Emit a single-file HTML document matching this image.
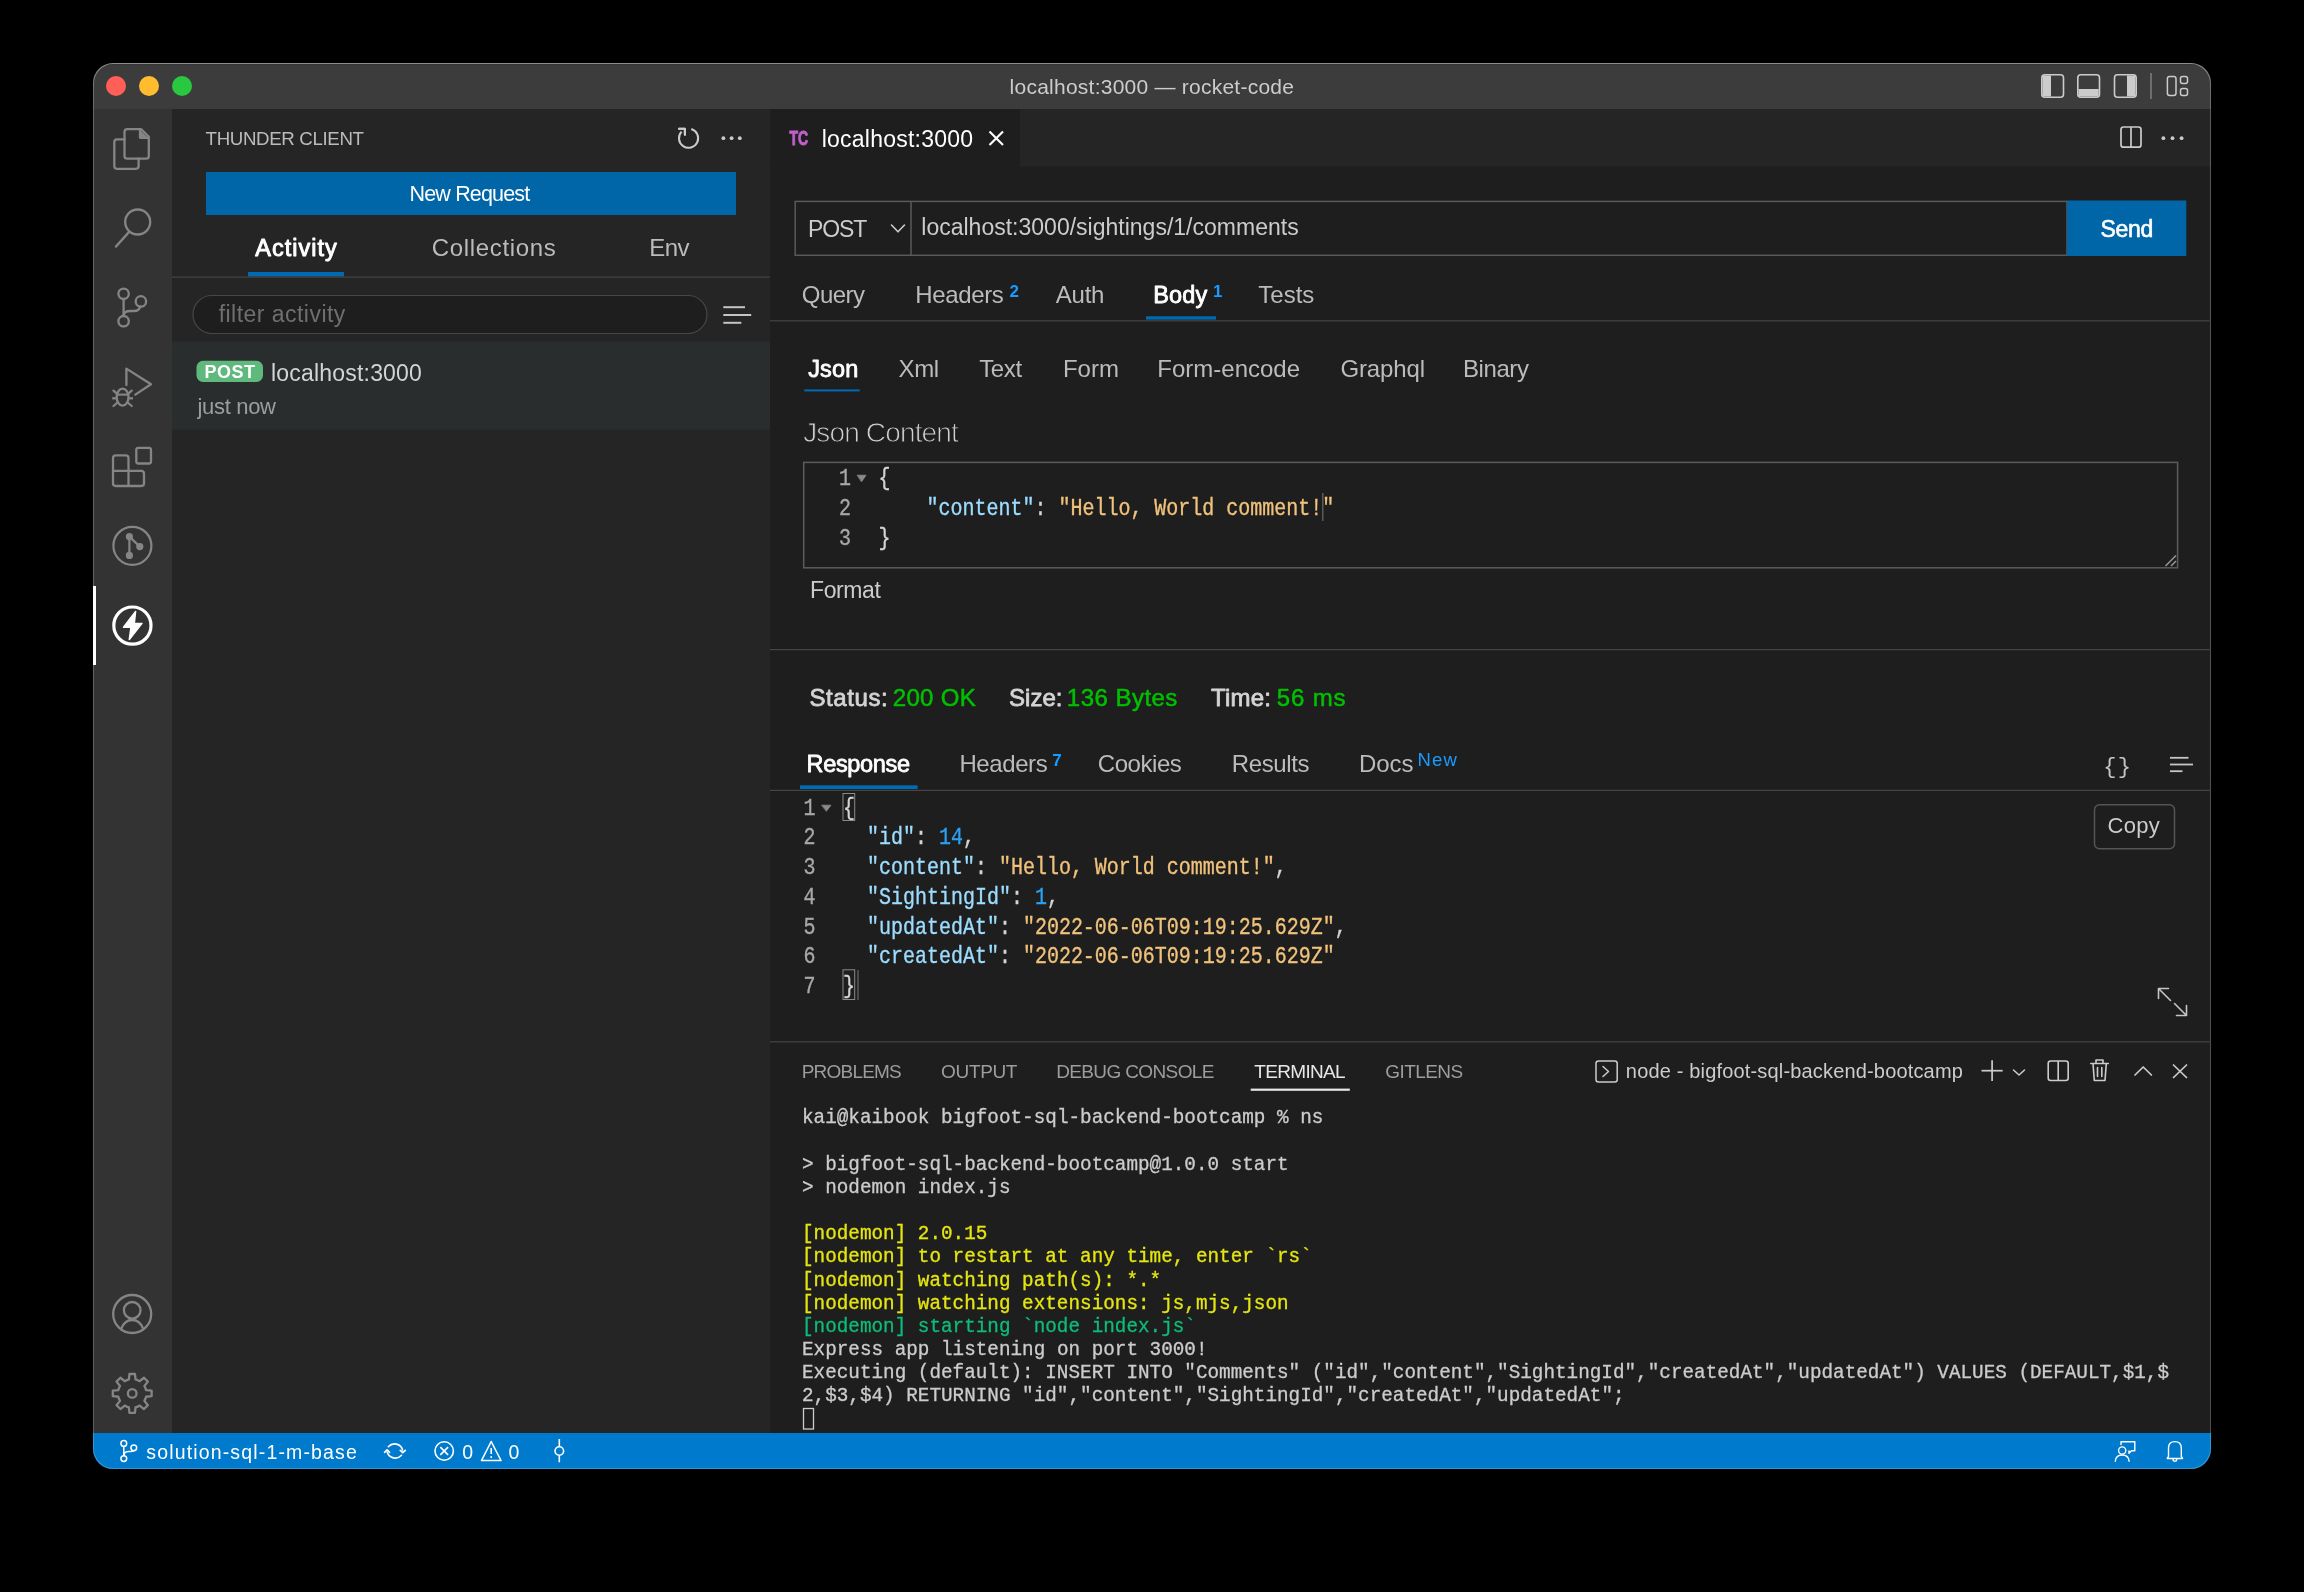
<!DOCTYPE html>
<html><head><meta charset="utf-8"><title>VS Code - Thunder Client</title>
<style>
html,body{margin:0;padding:0;background:#000;width:2304px;height:1592px;overflow:hidden}
svg{display:block;will-change:transform}
text{font-kerning:normal}
</style></head><body>
<svg width="2304" height="1592" viewBox="0 0 2304 1592">
<rect x="0" y="0" width="2304" height="1592" fill="#000000"/>
<defs><clipPath id="win"><rect x="93" y="63" width="2118" height="1406" rx="20"/></clipPath></defs>
<g clip-path="url(#win)">
<rect x="93" y="63" width="2118" height="1406" rx="0" fill="#1e1e1e" />
<rect x="93" y="63" width="2118" height="46" rx="0" fill="#3c3c3c" />
<rect x="93" y="109" width="79" height="1324" rx="0" fill="#333333" />
<rect x="172" y="109" width="598" height="1324" rx="0" fill="#252526" />
<rect x="770" y="109" width="1441" height="57.5" rx="0" fill="#252526" />
<rect x="770" y="109" width="250" height="57.5" rx="0" fill="#1e1e1e" />
<rect x="93" y="1433" width="2118" height="36" rx="0" fill="#007acc" />
</g>
<defs><linearGradient id="ol" gradientUnits="userSpaceOnUse" x1="0" y1="63" x2="0" y2="1469"><stop offset="0" stop-color="#ffffff" stop-opacity="0.42"/><stop offset="0.02" stop-color="#ffffff" stop-opacity="0.24"/><stop offset="1" stop-color="#ffffff" stop-opacity="0.2"/></linearGradient></defs>
<rect x="93.5" y="63.5" width="2117" height="1405" rx="20" fill="none" stroke="url(#ol)" stroke-width="1.1"/>
<line x1="99" y1="64.6" x2="2205" y2="64.6" stroke="#000000" stroke-opacity="0.12" stroke-width="1" stroke-linecap="butt"/>
<circle cx="116" cy="86" r="10" fill="#ff5f57"/>
<circle cx="149" cy="86" r="10" fill="#febc2e"/>
<circle cx="182" cy="86" r="10" fill="#28c840"/>
<text x="1009.58" y="93.5" font-family="Liberation Sans" font-size="21" font-weight="400" fill="#cccccc" textLength="284.35" lengthAdjust="spacing"  xml:space="preserve">localhost:3000 — rocket-code</text>
<rect x="2041.8" y="74.8" width="21.7" height="22.4" rx="3" fill="none" stroke="#cccccc" stroke-width="1.6" />
<path d="M2044 75.6 H2051 V96.4 H2044 Q2042.6 96.4 2042.6 95 V77 Q2042.6 75.6 2044 75.6 Z" stroke="none" stroke-width="1" fill="#cccccc" stroke-linecap="round" stroke-linejoin="round" />
<rect x="2077.8" y="74.8" width="21.7" height="22.4" rx="3" fill="none" stroke="#cccccc" stroke-width="1.6" />
<path d="M2078.6 89 H2098.7 V95 Q2098.7 96.4 2097.3 96.4 H2080 Q2078.6 96.4 2078.6 95 Z" stroke="none" stroke-width="1" fill="#cccccc" stroke-linecap="round" stroke-linejoin="round" />
<rect x="2114.5" y="74.8" width="21.7" height="22.4" rx="3" fill="none" stroke="#cccccc" stroke-width="1.6" />
<path d="M2127 75.6 H2134 Q2135.4 75.6 2135.4 77 V95 Q2135.4 96.4 2134 96.4 H2127 Z" stroke="none" stroke-width="1" fill="#cccccc" stroke-linecap="round" stroke-linejoin="round" />
<line x1="2151" y1="73" x2="2151" y2="99" stroke="#8a8a8a" stroke-width="1.3" stroke-linecap="butt"/>
<rect x="2167.4" y="76.5" width="8.6" height="19.0" rx="2.2" fill="none" stroke="#cccccc" stroke-width="1.5" />
<rect x="2180.5" y="76.5" width="7.0" height="7.0" rx="2" fill="none" stroke="#cccccc" stroke-width="1.5" />
<rect x="2180.5" y="88.5" width="7.0" height="7.0" rx="2" fill="none" stroke="#cccccc" stroke-width="1.5" />
<path d="M124.5 139.4 H117 Q114.3 139.4 114.3 142.1 V166.1 Q114.3 168.8 117 168.8 H135.9 Q138.6 168.8 138.6 166.1 V158.6" stroke="#858585" stroke-width="2.3" fill="none" stroke-linecap="round" stroke-linejoin="round" />
<path d="M127.2 129.2 H141.3 L148.8 136.7 V155.9 Q148.8 158.6 146.1 158.6 H127.2 Q124.5 158.6 124.5 155.9 V131.9 Q124.5 129.2 127.2 129.2 Z" stroke="#858585" stroke-width="2.3" fill="none" stroke-linecap="round" stroke-linejoin="round" />
<path d="M140 130 V137.8 H148" stroke="#858585" stroke-width="2.3" fill="#858585" stroke-linecap="round" stroke-linejoin="round" />
<circle cx="137.7" cy="222" r="12.5" fill="none" stroke="#858585" stroke-width="2.3"/>
<line x1="116" y1="246.5" x2="129" y2="232" stroke="#858585" stroke-width="2.5" stroke-linecap="round"/>
<circle cx="123.6" cy="293.8" r="5.2" fill="none" stroke="#858585" stroke-width="2.3"/>
<circle cx="140.9" cy="301.4" r="5.2" fill="none" stroke="#858585" stroke-width="2.3"/>
<circle cx="123.6" cy="321.2" r="5.2" fill="none" stroke="#858585" stroke-width="2.3"/>
<line x1="123.6" y1="299" x2="123.6" y2="316" stroke="#858585" stroke-width="2.3" stroke-linecap="butt"/>
<path d="M123.6 315 Q124.5 311 130 311 H134 Q139 311 140.3 306.6" stroke="#858585" stroke-width="2.3" fill="none" stroke-linecap="round" stroke-linejoin="round" />
<path d="M126.4 385 V368.6 L151 384.2 L135.3 394.6" stroke="#858585" stroke-width="2.3" fill="none" stroke-linecap="round" stroke-linejoin="round" />
<ellipse cx="122.6" cy="397.2" rx="5.9" ry="8.5" fill="none" stroke="#858585" stroke-width="2.3"/>
<line x1="117" y1="394.6" x2="128.2" y2="394.6" stroke="#858585" stroke-width="2.0999999999999996" stroke-linecap="butt"/>
<line x1="112.2" y1="398.3" x2="116.8" y2="398.3" stroke="#858585" stroke-width="2.3" stroke-linecap="butt"/>
<line x1="128.4" y1="398.3" x2="133" y2="398.3" stroke="#858585" stroke-width="2.3" stroke-linecap="butt"/>
<line x1="113.5" y1="390.6" x2="116.9" y2="393.6" stroke="#858585" stroke-width="2.3" stroke-linecap="round"/>
<line x1="131.7" y1="390.6" x2="128.3" y2="393.6" stroke="#858585" stroke-width="2.3" stroke-linecap="round"/>
<line x1="113.5" y1="406" x2="117" y2="403" stroke="#858585" stroke-width="2.3" stroke-linecap="round"/>
<line x1="131.7" y1="406" x2="128.2" y2="403" stroke="#858585" stroke-width="2.3" stroke-linecap="round"/>
<rect x="136.3" y="447.8" width="14.7" height="15.7" rx="2" fill="none" stroke="#858585" stroke-width="2.3" />
<path d="M113 458 Q113 455.3 115.7 455.3 H125.8 Q128.5 455.3 128.5 458 V470.8 H141.3 Q144 470.8 144 473.5 V483.3 Q144 486 141.3 486 H115.7 Q113 486 113 483.3 Z M113 470.8 H128.5 V486" stroke="#858585" stroke-width="2.3" fill="none" stroke-linecap="round" stroke-linejoin="round" />
<circle cx="132.4" cy="545.8" r="19" fill="none" stroke="#858585" stroke-width="2.2"/>
<path d="M129.4 536.6 V555.4 M129.4 536.6 L139.8 546.6" stroke="#858585" stroke-width="2.2" fill="none" stroke-linecap="round" stroke-linejoin="round" />
<circle cx="129.4" cy="536.6" r="3.6" fill="#858585"/>
<circle cx="139.8" cy="546.6" r="3.6" fill="#858585"/>
<circle cx="129.4" cy="555.4" r="3.6" fill="#858585"/>
<circle cx="132.4" cy="625.6" r="18.6" fill="none" stroke="#ffffff" stroke-width="3.2"/>
<path d="M135.6 611.5 L123.5 627.2 H131 L129.3 639.5 L142 623.4 H134.3 Z" stroke="#ffffff" stroke-width="1.5" fill="#ffffff" stroke-linecap="round" stroke-linejoin="round" />
<rect x="93" y="586" width="3" height="79" rx="0" fill="#ffffff" />
<circle cx="132.2" cy="1314" r="19" fill="none" stroke="#858585" stroke-width="2.3"/>
<circle cx="132.2" cy="1310.3" r="8.3" fill="none" stroke="#858585" stroke-width="2.3"/>
<path d="M121.2 1328.8 Q124.5 1320 132.2 1320 Q139.9 1320 143.2 1328.8" stroke="#858585" stroke-width="2.3" fill="none" stroke-linecap="round" stroke-linejoin="round" />
<path d="M126.73 1380.19 L128.86 1379.50 L129.47 1373.99 L134.93 1373.99 L135.54 1379.50 L137.67 1380.19 L139.67 1381.21 L144.00 1377.75 L147.85 1381.60 L144.39 1385.93 L145.41 1387.93 L146.10 1390.06 L151.61 1390.67 L151.61 1396.13 L146.10 1396.74 L145.41 1398.87 L144.39 1400.87 L147.85 1405.20 L144.00 1409.05 L139.67 1405.59 L137.67 1406.61 L135.54 1407.30 L134.93 1412.81 L129.47 1412.81 L128.86 1407.30 L126.73 1406.61 L124.73 1405.59 L120.40 1409.05 L116.55 1405.20 L120.01 1400.87 L118.99 1398.87 L118.30 1396.74 L112.79 1396.13 L112.79 1390.67 L118.30 1390.06 L118.99 1387.93 L120.01 1385.93 L116.55 1381.60 L120.40 1377.75 L124.73 1381.21 Z" stroke="#858585" stroke-width="2.3" fill="none" stroke-linecap="round" stroke-linejoin="round" />
<circle cx="132.2" cy="1393.4" r="4.3" fill="none" stroke="#858585" stroke-width="2.3"/>
<text x="205.58" y="145.2" font-family="Liberation Sans" font-size="18.7" font-weight="400" fill="#bbbbbb" textLength="158.45" lengthAdjust="spacing"  xml:space="preserve">THUNDER CLIENT</text>
<path d="M681.6 131.6 A9.6 9.6 0 1 0 691.3 129" fill="none" stroke="#cccccc" stroke-width="2"/>
<path d="M679 128.8 H684.9 V134.8" stroke="#cccccc" stroke-width="2.1" fill="none" stroke-linecap="round" stroke-linejoin="round" />
<path d="M679 128.8 H684.9 V134.8" stroke="#cccccc" stroke-width="2.1" fill="none" stroke-linecap="round" stroke-linejoin="round" />
<circle cx="723.4" cy="138.2" r="1.9" fill="#cccccc"/>
<circle cx="731.6" cy="138.2" r="1.9" fill="#cccccc"/>
<circle cx="739.8" cy="138.2" r="1.9" fill="#cccccc"/>
<rect x="206" y="172" width="530" height="43" rx="0" fill="#0066a8" />
<text x="409.54" y="200.6" font-family="Liberation Sans" font-size="21.5" font-weight="400" fill="#ffffff" textLength="120.62" lengthAdjust="spacing"  xml:space="preserve">New Request</text>
<text x="255.25" y="255.8" font-family="Liberation Sans" font-size="23.5" font-weight="400" fill="#ffffff" textLength="81.49" lengthAdjust="spacing"  stroke="#ffffff" stroke-width="0.9" stroke-linejoin="round" xml:space="preserve">Activity</text>
<text x="431.78" y="255.8" font-family="Liberation Sans" font-size="24" font-weight="400" fill="#bbbbbb" textLength="124.09" lengthAdjust="spacing"  xml:space="preserve">Collections</text>
<text x="649.33" y="255.8" font-family="Liberation Sans" font-size="24" font-weight="400" fill="#bbbbbb" textLength="40.05" lengthAdjust="spacing"  xml:space="preserve">Env</text>
<rect x="248" y="272" width="96" height="4.5" rx="0" fill="#006ab3" />
<rect x="172" y="276.5" width="598" height="1.2" rx="0" fill="#454545" />
<rect x="193" y="295.5" width="514" height="38" rx="19" fill="#1e1e1e" stroke="#474747" stroke-width="1.2"/>
<text x="218.67" y="322.4" font-family="Liberation Sans" font-size="23" font-weight="400" fill="#6f6f6f" textLength="126.67" lengthAdjust="spacing"  xml:space="preserve">filter activity</text>
<line x1="723.3" y1="307.2" x2="745" y2="307.2" stroke="#c5c5c5" stroke-width="2" stroke-linecap="butt"/>
<line x1="723.3" y1="315" x2="751.2" y2="315" stroke="#c5c5c5" stroke-width="2" stroke-linecap="butt"/>
<line x1="723.3" y1="322.8" x2="741.3" y2="322.8" stroke="#c5c5c5" stroke-width="2" stroke-linecap="butt"/>
<rect x="172" y="341.5" width="598" height="88.1" rx="0" fill="#2a2d2e" />
<rect x="196.5" y="360.8" width="66.5" height="21.2" rx="6.5" fill="#5fb97d" />
<text x="204.5" y="378" font-family="Liberation Sans" font-size="18" font-weight="700" fill="#ffffff" textLength="50.4" lengthAdjust="spacing"  xml:space="preserve">POST</text>
<text x="270.95" y="380.7" font-family="Liberation Sans" font-size="23" font-weight="400" fill="#d4d4d4" textLength="150.95" lengthAdjust="spacing"  xml:space="preserve">localhost:3000</text>
<text x="197.54" y="413.8" font-family="Liberation Sans" font-size="22" font-weight="400" fill="#9d9d9d" textLength="78.41" lengthAdjust="spacing"  xml:space="preserve">just now</text>
<text x="0" y="0" transform="translate(789.5 145.4) scale(0.72 1)" font-family="Liberation Sans" font-weight="700" font-size="19.5" fill="#c060c8" stroke="#c060c8" stroke-width="0.9">TC</text>
<text x="821.65" y="146.9" font-family="Liberation Sans" font-size="23" font-weight="400" fill="#ffffff" textLength="151.45" lengthAdjust="spacing"  xml:space="preserve">localhost:3000</text>
<line x1="989.5" y1="131.5" x2="1003" y2="145" stroke="#ffffff" stroke-width="2.1" stroke-linecap="butt"/>
<line x1="1003" y1="131.5" x2="989.5" y2="145" stroke="#ffffff" stroke-width="2.1" stroke-linecap="butt"/>
<rect x="2121" y="127" width="20" height="20.2" rx="2.5" fill="none" stroke="#cccccc" stroke-width="1.7" />
<line x1="2131" y1="127" x2="2131" y2="147.2" stroke="#cccccc" stroke-width="1.7" stroke-linecap="butt"/>
<circle cx="2163.4" cy="138.2" r="1.9" fill="#cccccc"/>
<circle cx="2172.5" cy="138.2" r="1.9" fill="#cccccc"/>
<circle cx="2181.6" cy="138.2" r="1.9" fill="#cccccc"/>
<rect x="795.2" y="201.4" width="1271.8" height="53.9" rx="0" fill="none" stroke="#5a5a5a" stroke-width="1.5" />
<line x1="911" y1="201.4" x2="911" y2="255.3" stroke="#5a5a5a" stroke-width="1.5" stroke-linecap="butt"/>
<text x="808.11" y="237.2" font-family="Liberation Sans" font-size="23" font-weight="400" fill="#cccccc" textLength="59.21" lengthAdjust="spacing"  xml:space="preserve">POST</text>
<path d="M891.5 225 L898 231.8 L904.5 225" stroke="#cccccc" stroke-width="1.6" fill="none" stroke-linecap="round" stroke-linejoin="round" />
<text x="921.25" y="234.7" font-family="Liberation Sans" font-size="23" font-weight="400" fill="#cccccc" textLength="377.38" lengthAdjust="spacing"  xml:space="preserve">localhost:3000/sightings/1/comments</text>
<rect x="2067" y="200.5" width="119.3" height="55.5" rx="0" fill="#0066a8" />
<text x="2100.56" y="236.5" font-family="Liberation Sans" font-size="23" font-weight="400" fill="#ffffff" textLength="52.73" lengthAdjust="spacing"  stroke="#ffffff" stroke-width="0.6" stroke-linejoin="round" xml:space="preserve">Send</text>
<text x="801.86" y="303.3" font-family="Liberation Sans" font-size="24" font-weight="400" fill="#bbbbbb" textLength="63.18" lengthAdjust="spacing"  xml:space="preserve">Query</text>
<text x="915.33" y="303.3" font-family="Liberation Sans" font-size="24" font-weight="400" fill="#bbbbbb" textLength="88.54" lengthAdjust="spacing"  xml:space="preserve">Headers</text>
<text x="1009.41" y="296.5" font-family="Liberation Sans" font-size="17" font-weight="700" fill="#1a9bff" textLength="11.07" lengthAdjust="spacing"  xml:space="preserve">2</text>
<text x="1055.85" y="303.3" font-family="Liberation Sans" font-size="24" font-weight="400" fill="#bbbbbb" textLength="48.61" lengthAdjust="spacing"  xml:space="preserve">Auth</text>
<text x="1153.37" y="303.3" font-family="Liberation Sans" font-size="23.5" font-weight="400" fill="#ffffff" textLength="53.77" lengthAdjust="spacing"  stroke="#ffffff" stroke-width="0.8" stroke-linejoin="round" xml:space="preserve">Body</text>
<text x="1212.93" y="296.5" font-family="Liberation Sans" font-size="17" font-weight="700" fill="#1a9bff" textLength="8.04" lengthAdjust="spacing"  xml:space="preserve">1</text>
<text x="1258.36" y="303.3" font-family="Liberation Sans" font-size="24" font-weight="400" fill="#bbbbbb" textLength="56.01" lengthAdjust="spacing"  xml:space="preserve">Tests</text>
<rect x="1146" y="316.3" width="70" height="3.3" rx="0" fill="#006ab3" />
<rect x="770" y="320.2" width="1441" height="1.2" rx="0" fill="#454545" />
<text x="808.13" y="376.7" font-family="Liberation Sans" font-size="23.5" font-weight="400" fill="#ffffff" textLength="50.19" lengthAdjust="spacing"  stroke="#ffffff" stroke-width="0.8" stroke-linejoin="round" xml:space="preserve">Json</text>
<text x="898.56" y="376.7" font-family="Liberation Sans" font-size="24" font-weight="400" fill="#bbbbbb" textLength="40.54" lengthAdjust="spacing"  xml:space="preserve">Xml</text>
<text x="979.26" y="376.7" font-family="Liberation Sans" font-size="24" font-weight="400" fill="#bbbbbb" textLength="42.81" lengthAdjust="spacing"  xml:space="preserve">Text</text>
<text x="1062.93" y="376.7" font-family="Liberation Sans" font-size="24" font-weight="400" fill="#bbbbbb" textLength="56.05" lengthAdjust="spacing"  xml:space="preserve">Form</text>
<text x="1157.23" y="376.7" font-family="Liberation Sans" font-size="24" font-weight="400" fill="#bbbbbb" textLength="142.84" lengthAdjust="spacing"  xml:space="preserve">Form-encode</text>
<text x="1340.39" y="376.7" font-family="Liberation Sans" font-size="24" font-weight="400" fill="#bbbbbb" textLength="84.81" lengthAdjust="spacing"  xml:space="preserve">Graphql</text>
<text x="1462.93" y="376.7" font-family="Liberation Sans" font-size="24" font-weight="400" fill="#bbbbbb" textLength="66.02" lengthAdjust="spacing"  xml:space="preserve">Binary</text>
<rect x="804.3" y="389.4" width="55.4" height="2.0" rx="0" fill="#006ab3" />
<text x="803.16" y="441.8" font-family="Liberation Sans" font-size="28" font-weight="400" fill="#d0d0d0" textLength="155.64" lengthAdjust="spacing" stroke="#1e1e1e" stroke-width="0.9" xml:space="preserve">Json Content</text>
<rect x="803.7" y="462.4" width="1373.9" height="105.4" rx="0" fill="none" stroke="#5c5c5c" stroke-width="1.5" />
<text x="0" y="0" transform="translate(839 485) scale(1 1.17)" font-family="Liberation Mono" font-size="20" stroke-width="0.3" xml:space="preserve"><tspan fill="#a8a8a8" stroke="#a8a8a8">1</tspan></text>
<text x="0" y="0" transform="translate(839 515) scale(1 1.17)" font-family="Liberation Mono" font-size="20" stroke-width="0.3" xml:space="preserve"><tspan fill="#a8a8a8" stroke="#a8a8a8">2</tspan></text>
<text x="0" y="0" transform="translate(839 545) scale(1 1.17)" font-family="Liberation Mono" font-size="20" stroke-width="0.3" xml:space="preserve"><tspan fill="#a8a8a8" stroke="#a8a8a8">3</tspan></text>
<path d="M857.5 475.2 H866 L861.7 481.5 Z" stroke="#8a8a8a" stroke-width="0.8" fill="#8a8a8a" stroke-linecap="round" stroke-linejoin="round" />
<text x="0" y="0" transform="translate(878.5 485) scale(1 1.17)" font-family="Liberation Mono" font-size="20" stroke-width="0.3" xml:space="preserve"><tspan fill="#d4d4d4" stroke="#d4d4d4">{</tspan></text>
<text x="0" y="0" transform="translate(878.5 515) scale(1 1.17)" font-family="Liberation Mono" font-size="20" stroke-width="0.3" xml:space="preserve"><tspan fill="#d4d4d4" stroke="#d4d4d4">    </tspan><tspan fill="#9cdcfe" stroke="#9cdcfe">"content"</tspan><tspan fill="#d4d4d4" stroke="#d4d4d4">: </tspan><tspan fill="#f0c27b" stroke="#f0c27b">"Hello, World comment!</tspan><tspan fill="#f0c27b" stroke="#f0c27b">"</tspan></text>
<text x="0" y="0" transform="translate(878.5 545) scale(1 1.17)" font-family="Liberation Mono" font-size="20" stroke-width="0.3" xml:space="preserve"><tspan fill="#d4d4d4" stroke="#d4d4d4">}</tspan></text>
<line x1="1322.8" y1="493" x2="1322.8" y2="521" stroke="#6a6a6a" stroke-width="1.2" stroke-linecap="butt"/>
<line x1="2165.5" y1="566" x2="2176" y2="555.5" stroke="#9a9a9a" stroke-width="1.5" stroke-linecap="butt"/>
<line x1="2171" y1="566" x2="2176" y2="561" stroke="#9a9a9a" stroke-width="1.5" stroke-linecap="butt"/>
<text x="810.11" y="598" font-family="Liberation Sans" font-size="23" font-weight="400" fill="#cccccc" textLength="70.66" lengthAdjust="spacing"  xml:space="preserve">Format</text>
<rect x="770" y="649" width="1441" height="1.2" rx="0" fill="#454545" />
<text x="809.41" y="706.2" font-family="Liberation Sans" font-size="24" font-weight="400" fill="#d4d4d4" textLength="78.28" lengthAdjust="spacing"  stroke="#d4d4d4" stroke-width="0.8" stroke-linejoin="round" xml:space="preserve">Status:</text>
<text x="892.79" y="706.2" font-family="Liberation Sans" font-size="24" font-weight="400" fill="#00c000" textLength="82.88" lengthAdjust="spacing"  stroke="#00c000" stroke-width="0.5" stroke-linejoin="round" xml:space="preserve">200 OK</text>
<text x="1009.11" y="706.2" font-family="Liberation Sans" font-size="24" font-weight="400" fill="#d4d4d4" textLength="53.28" lengthAdjust="spacing"  stroke="#d4d4d4" stroke-width="0.8" stroke-linejoin="round" xml:space="preserve">Size:</text>
<text x="1066.87" y="706.2" font-family="Liberation Sans" font-size="24" font-weight="400" fill="#00c000" textLength="110.5" lengthAdjust="spacing"  stroke="#00c000" stroke-width="0.5" stroke-linejoin="round" xml:space="preserve">136 Bytes</text>
<text x="1210.96" y="706.2" font-family="Liberation Sans" font-size="24" font-weight="400" fill="#d4d4d4" textLength="60.03" lengthAdjust="spacing"  stroke="#d4d4d4" stroke-width="0.8" stroke-linejoin="round" xml:space="preserve">Time:</text>
<text x="1276.74" y="706.2" font-family="Liberation Sans" font-size="24" font-weight="400" fill="#00c000" textLength="68.73" lengthAdjust="spacing"  stroke="#00c000" stroke-width="0.5" stroke-linejoin="round" xml:space="preserve">56 ms</text>
<text x="806.57" y="772.4" font-family="Liberation Sans" font-size="23.5" font-weight="400" fill="#ffffff" textLength="103.47" lengthAdjust="spacing"  stroke="#ffffff" stroke-width="0.8" stroke-linejoin="round" xml:space="preserve">Response</text>
<text x="959.43" y="772.4" font-family="Liberation Sans" font-size="24" font-weight="400" fill="#bbbbbb" textLength="88.24" lengthAdjust="spacing"  xml:space="preserve">Headers</text>
<text x="1052.27" y="766" font-family="Liberation Sans" font-size="17" font-weight="700" fill="#1a9bff" textLength="9.98" lengthAdjust="spacing"  xml:space="preserve">7</text>
<text x="1097.78" y="772.4" font-family="Liberation Sans" font-size="24" font-weight="400" fill="#bbbbbb" textLength="84.09" lengthAdjust="spacing"  xml:space="preserve">Cookies</text>
<text x="1231.73" y="772.4" font-family="Liberation Sans" font-size="24" font-weight="400" fill="#bbbbbb" textLength="77.84" lengthAdjust="spacing"  xml:space="preserve">Results</text>
<text x="1359.03" y="772.4" font-family="Liberation Sans" font-size="24" font-weight="400" fill="#bbbbbb" textLength="54.44" lengthAdjust="spacing"  xml:space="preserve">Docs</text>
<text x="1417.48" y="766.4" font-family="Liberation Sans" font-size="18.5" font-weight="400" fill="#1a9bff" textLength="39.47" lengthAdjust="spacing"  xml:space="preserve">New</text>
<rect x="800" y="785.3" width="117.6" height="3.7" rx="0" fill="#006ab3" />
<rect x="770" y="789.8" width="1441" height="1.2" rx="0" fill="#454545" />
<text x="2103.26" y="773" font-family="Liberation Mono" font-size="22" font-weight="400" fill="#c5c5c5" textLength="27.69" lengthAdjust="spacing"  xml:space="preserve">{ }</text>
<line x1="2170" y1="757.8" x2="2188.5" y2="757.8" stroke="#c5c5c5" stroke-width="1.8" stroke-linecap="butt"/>
<line x1="2170" y1="764.5" x2="2193" y2="764.5" stroke="#c5c5c5" stroke-width="1.8" stroke-linecap="butt"/>
<line x1="2170" y1="771.2" x2="2182.5" y2="771.2" stroke="#c5c5c5" stroke-width="1.8" stroke-linecap="butt"/>
<text x="0" y="0" transform="translate(803.5 814.7) scale(1 1.17)" font-family="Liberation Mono" font-size="20" stroke-width="0.3" xml:space="preserve"><tspan fill="#a8a8a8" stroke="#a8a8a8">1</tspan></text>
<text x="0" y="0" transform="translate(803.5 844.45) scale(1 1.17)" font-family="Liberation Mono" font-size="20" stroke-width="0.3" xml:space="preserve"><tspan fill="#a8a8a8" stroke="#a8a8a8">2</tspan></text>
<text x="0" y="0" transform="translate(803.5 874.2) scale(1 1.17)" font-family="Liberation Mono" font-size="20" stroke-width="0.3" xml:space="preserve"><tspan fill="#a8a8a8" stroke="#a8a8a8">3</tspan></text>
<text x="0" y="0" transform="translate(803.5 903.95) scale(1 1.17)" font-family="Liberation Mono" font-size="20" stroke-width="0.3" xml:space="preserve"><tspan fill="#a8a8a8" stroke="#a8a8a8">4</tspan></text>
<text x="0" y="0" transform="translate(803.5 933.7) scale(1 1.17)" font-family="Liberation Mono" font-size="20" stroke-width="0.3" xml:space="preserve"><tspan fill="#a8a8a8" stroke="#a8a8a8">5</tspan></text>
<text x="0" y="0" transform="translate(803.5 963.45) scale(1 1.17)" font-family="Liberation Mono" font-size="20" stroke-width="0.3" xml:space="preserve"><tspan fill="#a8a8a8" stroke="#a8a8a8">6</tspan></text>
<text x="0" y="0" transform="translate(803.5 993.2) scale(1 1.17)" font-family="Liberation Mono" font-size="20" stroke-width="0.3" xml:space="preserve"><tspan fill="#a8a8a8" stroke="#a8a8a8">7</tspan></text>
<path d="M822 805.2 H831 L826.5 811 Z" stroke="#8a8a8a" stroke-width="0.8" fill="#8a8a8a" stroke-linecap="round" stroke-linejoin="round" />
<text x="0" y="0" transform="translate(843 814.7) scale(1 1.17)" font-family="Liberation Mono" font-size="20" stroke-width="0.3" xml:space="preserve"><tspan fill="#d4d4d4" stroke="#d4d4d4">{</tspan></text>
<text x="0" y="0" transform="translate(843 844.45) scale(1 1.17)" font-family="Liberation Mono" font-size="20" stroke-width="0.3" xml:space="preserve"><tspan fill="#d4d4d4" stroke="#d4d4d4">  </tspan><tspan fill="#9cdcfe" stroke="#9cdcfe">"id"</tspan><tspan fill="#d4d4d4" stroke="#d4d4d4">: </tspan><tspan fill="#2aa1f5" stroke="#2aa1f5">14</tspan><tspan fill="#d4d4d4" stroke="#d4d4d4">,</tspan></text>
<text x="0" y="0" transform="translate(843 874.2) scale(1 1.17)" font-family="Liberation Mono" font-size="20" stroke-width="0.3" xml:space="preserve"><tspan fill="#d4d4d4" stroke="#d4d4d4">  </tspan><tspan fill="#9cdcfe" stroke="#9cdcfe">"content"</tspan><tspan fill="#d4d4d4" stroke="#d4d4d4">: </tspan><tspan fill="#f0c27b" stroke="#f0c27b">"Hello, World comment!"</tspan><tspan fill="#d4d4d4" stroke="#d4d4d4">,</tspan></text>
<text x="0" y="0" transform="translate(843 903.95) scale(1 1.17)" font-family="Liberation Mono" font-size="20" stroke-width="0.3" xml:space="preserve"><tspan fill="#d4d4d4" stroke="#d4d4d4">  </tspan><tspan fill="#9cdcfe" stroke="#9cdcfe">"SightingId"</tspan><tspan fill="#d4d4d4" stroke="#d4d4d4">: </tspan><tspan fill="#2aa1f5" stroke="#2aa1f5">1</tspan><tspan fill="#d4d4d4" stroke="#d4d4d4">,</tspan></text>
<text x="0" y="0" transform="translate(843 933.7) scale(1 1.17)" font-family="Liberation Mono" font-size="20" stroke-width="0.3" xml:space="preserve"><tspan fill="#d4d4d4" stroke="#d4d4d4">  </tspan><tspan fill="#9cdcfe" stroke="#9cdcfe">"updatedAt"</tspan><tspan fill="#d4d4d4" stroke="#d4d4d4">: </tspan><tspan fill="#f0c27b" stroke="#f0c27b">"2022-06-06T09:19:25.629Z"</tspan><tspan fill="#d4d4d4" stroke="#d4d4d4">,</tspan></text>
<text x="0" y="0" transform="translate(843 963.45) scale(1 1.17)" font-family="Liberation Mono" font-size="20" stroke-width="0.3" xml:space="preserve"><tspan fill="#d4d4d4" stroke="#d4d4d4">  </tspan><tspan fill="#9cdcfe" stroke="#9cdcfe">"createdAt"</tspan><tspan fill="#d4d4d4" stroke="#d4d4d4">: </tspan><tspan fill="#f0c27b" stroke="#f0c27b">"2022-06-06T09:19:25.629Z"</tspan></text>
<text x="0" y="0" transform="translate(843 993.2) scale(1 1.17)" font-family="Liberation Mono" font-size="20" stroke-width="0.3" xml:space="preserve"><tspan fill="#d4d4d4" stroke="#d4d4d4">}</tspan></text>
<rect x="843" y="793.5" width="11.7" height="27.0" rx="0" fill="none" stroke="#8a8a8a" stroke-width="1" />
<rect x="843" y="969.8" width="11.7" height="29.7" rx="0" fill="none" stroke="#8a8a8a" stroke-width="1" />
<line x1="858" y1="970" x2="858" y2="1000" stroke="#5a5a5a" stroke-width="1.5" stroke-linecap="butt"/>
<rect x="2094.5" y="804.8" width="80" height="44" rx="5" fill="#1e1e1e" stroke="#555555" stroke-width="1.5"/>
<text x="2107.58" y="833.2" font-family="Liberation Sans" font-size="22" font-weight="400" fill="#cccccc" textLength="52.16" lengthAdjust="spacing"  xml:space="preserve">Copy</text>
<path d="M2158.5 998.5 V988.5 H2168.5 M2158.5 988.5 L2170.5 1000.5" stroke="#c5c5c5" stroke-width="1.6" fill="none" stroke-linecap="round" stroke-linejoin="round" />
<path d="M2186.5 1005.5 V1015.5 H2176.5 M2186.5 1015.5 L2174.5 1003.5" stroke="#c5c5c5" stroke-width="1.6" fill="none" stroke-linecap="round" stroke-linejoin="round" />
<rect x="770" y="1041.2" width="1441" height="1.2" rx="0" fill="#454545" />
<text x="801.74" y="1078.2" font-family="Liberation Sans" font-size="19" font-weight="400" fill="#9d9d9d" textLength="100.03" lengthAdjust="spacing"  xml:space="preserve">PROBLEMS</text>
<text x="941.1" y="1078.2" font-family="Liberation Sans" font-size="19" font-weight="400" fill="#9d9d9d" textLength="76.34" lengthAdjust="spacing"  xml:space="preserve">OUTPUT</text>
<text x="1056.14" y="1078.2" font-family="Liberation Sans" font-size="19" font-weight="400" fill="#9d9d9d" textLength="158.28" lengthAdjust="spacing"  xml:space="preserve">DEBUG CONSOLE</text>
<text x="1254.37" y="1078.2" font-family="Liberation Sans" font-size="19" font-weight="400" fill="#e7e7e7" textLength="91.26" lengthAdjust="spacing"  xml:space="preserve">TERMINAL</text>
<text x="1385.34" y="1078.2" font-family="Liberation Sans" font-size="19" font-weight="400" fill="#9d9d9d" textLength="77.83" lengthAdjust="spacing"  xml:space="preserve">GITLENS</text>
<rect x="1250.7" y="1088.6" width="99.1" height="2.2" rx="0" fill="#e7e7e7" />
<rect x="1596" y="1061" width="21.2" height="21" rx="2.5" fill="none" stroke="#cccccc" stroke-width="1.5" />
<path d="M1603 1066.5 L1608.5 1071.5 L1603 1076.5" stroke="#cccccc" stroke-width="1.5" fill="none" stroke-linecap="round" stroke-linejoin="round" />
<text x="1625.87" y="1077.8" font-family="Liberation Sans" font-size="20" font-weight="400" fill="#cccccc" textLength="336.97" lengthAdjust="spacing"  xml:space="preserve">node - bigfoot-sql-backend-bootcamp</text>
<line x1="1981.5" y1="1070.7" x2="2002.7" y2="1070.7" stroke="#cccccc" stroke-width="1.7" stroke-linecap="butt"/>
<line x1="1992.1" y1="1060.3" x2="1992.1" y2="1081" stroke="#cccccc" stroke-width="1.7" stroke-linecap="butt"/>
<path d="M2013.5 1070 L2019 1075 L2024.5 1070" stroke="#cccccc" stroke-width="1.5" fill="none" stroke-linecap="round" stroke-linejoin="round" />
<rect x="2048.2" y="1061" width="20.0" height="19.5" rx="2.5" fill="none" stroke="#cccccc" stroke-width="1.6" />
<line x1="2058.2" y1="1061" x2="2058.2" y2="1080.5" stroke="#cccccc" stroke-width="1.6" stroke-linecap="butt"/>
<path d="M2090.8 1063.5 H2108.3 M2096 1063.5 V1060 H2103 V1063.5 M2093 1063.5 L2094.3 1080.5 H2105 L2106.3 1063.5 M2097.5 1067.5 V1076.5 M2101.8 1067.5 V1076.5" stroke="#cccccc" stroke-width="1.6" fill="none" stroke-linecap="round" stroke-linejoin="round" />
<path d="M2135 1075 L2143.2 1067 L2151.4 1075" stroke="#cccccc" stroke-width="1.7" fill="none" stroke-linecap="round" stroke-linejoin="round" />
<line x1="2173" y1="1064.5" x2="2187" y2="1078" stroke="#cccccc" stroke-width="1.7" stroke-linecap="butt"/>
<line x1="2187" y1="1064.5" x2="2173" y2="1078" stroke="#cccccc" stroke-width="1.7" stroke-linecap="butt"/>
<text x="802" y="1123.4" font-family="Liberation Mono" font-size="19.3" fill="#cccccc" stroke="#cccccc" stroke-width="0.3" textLength="521.33" lengthAdjust="spacing" xml:space="preserve">kai@kaibook bigfoot-sql-backend-bootcamp % ns</text>
<text x="802" y="1169.72" font-family="Liberation Mono" font-size="19.3" fill="#cccccc" stroke="#cccccc" stroke-width="0.3" textLength="486.57" lengthAdjust="spacing" xml:space="preserve">&gt; bigfoot-sql-backend-bootcamp@1.0.0 start</text>
<text x="802" y="1192.88" font-family="Liberation Mono" font-size="19.3" fill="#cccccc" stroke="#cccccc" stroke-width="0.3" textLength="208.53" lengthAdjust="spacing" xml:space="preserve">&gt; nodemon index.js</text>
<text x="802" y="1239.2" font-family="Liberation Mono" font-size="19.3" fill="#e5e510" stroke="#e5e510" stroke-width="0.3" textLength="185.36" lengthAdjust="spacing" xml:space="preserve">[nodemon] 2.0.15</text>
<text x="802" y="1262.36" font-family="Liberation Mono" font-size="19.3" fill="#e5e510" stroke="#e5e510" stroke-width="0.3" textLength="509.74" lengthAdjust="spacing" xml:space="preserve">[nodemon] to restart at any time, enter `rs`</text>
<text x="802" y="1285.52" font-family="Liberation Mono" font-size="19.3" fill="#e5e510" stroke="#e5e510" stroke-width="0.3" textLength="359.14" lengthAdjust="spacing" xml:space="preserve">[nodemon] watching path(s): *.*</text>
<text x="802" y="1308.68" font-family="Liberation Mono" font-size="19.3" fill="#e5e510" stroke="#e5e510" stroke-width="0.3" textLength="486.57" lengthAdjust="spacing" xml:space="preserve">[nodemon] watching extensions: js,mjs,json</text>
<text x="802" y="1331.84" font-family="Liberation Mono" font-size="19.3" fill="#0dbc79" stroke="#0dbc79" stroke-width="0.3" textLength="393.89" lengthAdjust="spacing" xml:space="preserve">[nodemon] starting `node index.js`</text>
<text x="802" y="1355.0" font-family="Liberation Mono" font-size="19.3" fill="#cccccc" stroke="#cccccc" stroke-width="0.3" textLength="405.48" lengthAdjust="spacing" xml:space="preserve">Express app listening on port 3000!</text>
<text x="802" y="1378.16" font-family="Liberation Mono" font-size="19.3" fill="#cccccc" stroke="#cccccc" stroke-width="0.3" textLength="1367.03" lengthAdjust="spacing" xml:space="preserve">Executing (default): INSERT INTO "Comments" ("id","content","SightingId","createdAt","updatedAt") VALUES (DEFAULT,$1,$</text>
<text x="802" y="1401.32" font-family="Liberation Mono" font-size="19.3" fill="#cccccc" stroke="#cccccc" stroke-width="0.3" textLength="822.54" lengthAdjust="spacing" xml:space="preserve">2,$3,$4) RETURNING "id","content","SightingId","createdAt","updatedAt";</text>
<rect x="803.5" y="1408.5" width="10.0" height="20.5" rx="0" fill="none" stroke="#cccccc" stroke-width="1.3" />
<circle cx="123.8" cy="1443.4" r="2.9" fill="none" stroke="#ffffff" stroke-width="1.5"/>
<circle cx="133.8" cy="1447.8" r="2.9" fill="none" stroke="#ffffff" stroke-width="1.5"/>
<circle cx="123.8" cy="1458.6" r="2.9" fill="none" stroke="#ffffff" stroke-width="1.5"/>
<line x1="123.8" y1="1446.3" x2="123.8" y2="1455.7" stroke="#ffffff" stroke-width="1.5" stroke-linecap="butt"/>
<path d="M123.8 1455 Q124.5 1451.5 128.5 1451.5 Q133 1451.5 133.8 1450.7" stroke="#ffffff" stroke-width="1.5" fill="none" stroke-linecap="round" stroke-linejoin="round" />
<text x="146.26" y="1458.6" font-family="Liberation Sans" font-size="19.5" font-weight="400" fill="#ffffff" textLength="210.61" lengthAdjust="spacing"  xml:space="preserve">solution-sql-1-m-base</text>
<path d="M388.3 1446.7 A8.4 8.4 0 0 1 402.6 1450" fill="none" stroke="#ffffff" stroke-width="1.6" stroke-linecap="round"/>
<path d="M401.5 1455.3 A8.4 8.4 0 0 1 387.2 1452" fill="none" stroke="#ffffff" stroke-width="1.6" stroke-linecap="round"/>
<path d="M400.3 1450.3 L402.8 1452.6 L405.3 1450.3" stroke="#ffffff" stroke-width="1.7" fill="none" stroke-linecap="round" stroke-linejoin="round" />
<path d="M384.6 1452.4 L387.1 1449.8 L389.6 1452.4" stroke="#ffffff" stroke-width="1.7" fill="none" stroke-linecap="round" stroke-linejoin="round" />
<circle cx="444.2" cy="1451" r="9.2" fill="none" stroke="#ffffff" stroke-width="1.6"/>
<line x1="440.3" y1="1447.1" x2="448.1" y2="1454.9" stroke="#ffffff" stroke-width="1.6" stroke-linecap="butt"/>
<line x1="448.1" y1="1447.1" x2="440.3" y2="1454.9" stroke="#ffffff" stroke-width="1.6" stroke-linecap="butt"/>
<text x="462.24" y="1458.6" font-family="Liberation Sans" font-size="19.5" font-weight="400" fill="#ffffff" textLength="11.72" lengthAdjust="spacing"  xml:space="preserve">0</text>
<path d="M491.2 1441.5 L501 1460.5 H481.5 Z" stroke="#ffffff" stroke-width="1.6" fill="none" stroke-linecap="round" stroke-linejoin="round" />
<line x1="491.2" y1="1448" x2="491.2" y2="1454" stroke="#ffffff" stroke-width="1.6" stroke-linecap="butt"/>
<circle cx="491.2" cy="1457" r="1" fill="#ffffff"/>
<text x="508.44" y="1458.6" font-family="Liberation Sans" font-size="19.5" font-weight="400" fill="#ffffff" textLength="11.72" lengthAdjust="spacing"  xml:space="preserve">0</text>
<circle cx="559.3" cy="1451" r="4.3" fill="none" stroke="#ffffff" stroke-width="1.6"/>
<line x1="559.3" y1="1439" x2="559.3" y2="1446.7" stroke="#ffffff" stroke-width="1.6" stroke-linecap="butt"/>
<line x1="559.3" y1="1455.3" x2="559.3" y2="1462.3" stroke="#ffffff" stroke-width="1.6" stroke-linecap="butt"/>
<circle cx="2122.2" cy="1450.5" r="3.6" fill="none" stroke="#ffffff" stroke-width="1.4"/>
<path d="M2115.3 1461.2 Q2115.8 1455 2122.2 1455 Q2128.6 1455 2129.1 1461.2" stroke="#ffffff" stroke-width="1.4" fill="none" stroke-linecap="round" stroke-linejoin="round" />
<path d="M2121 1444.5 V1441.8 H2134.8 V1450.7 H2131.5 L2129 1453.2 V1451" stroke="#ffffff" stroke-width="1.4" fill="none" stroke-linecap="round" stroke-linejoin="round" />
<path d="M2167.2 1458.5 H2182.6 L2181.3 1456.5 V1448 Q2181.3 1441.6 2174.9 1441.6 Q2168.5 1441.6 2168.5 1448 V1456.5 Z" stroke="#ffffff" stroke-width="1.4" fill="none" stroke-linecap="round" stroke-linejoin="round" />
<path d="M2173 1459 Q2173 1461.2 2174.9 1461.2 Q2176.8 1461.2 2176.8 1459" stroke="#ffffff" stroke-width="1.3" fill="none" stroke-linecap="round" stroke-linejoin="round" />
</svg>
</body></html>
